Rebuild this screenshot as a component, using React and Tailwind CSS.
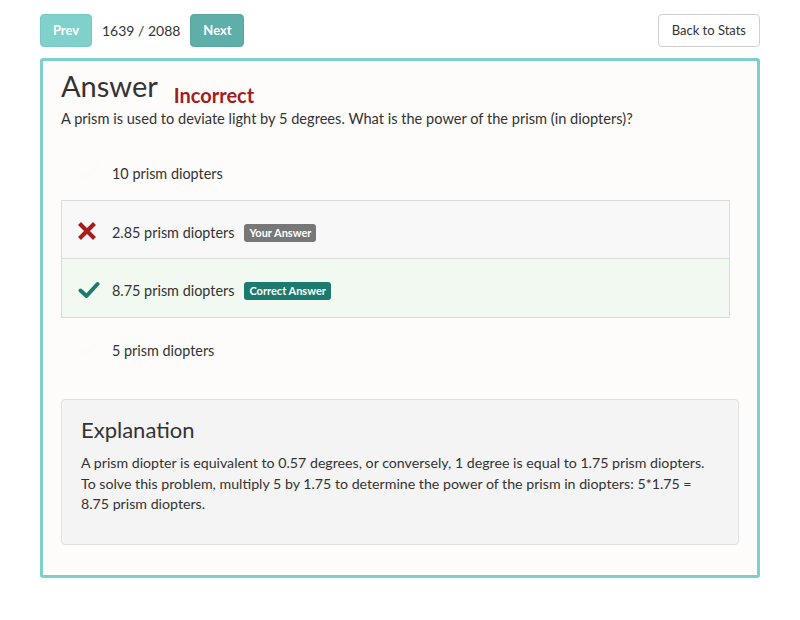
import { useState } from 'react'

const OPTIONS = [
  { id: 'a', text: '10 prism diopters', state: 'none' },
  { id: 'b', text: '2.85 prism diopters', state: 'wrong' },
  { id: 'c', text: '8.75 prism diopters', state: 'correct' },
  { id: 'd', text: '5 prism diopters', state: 'none' },
]

const CrossIcon = () => (
  <svg width="18" height="18" viewBox="0 0 18 18">
    <path d="M3 3 L15 15 M15 3 L3 15" stroke="#a51d1d" strokeWidth="4.2" strokeLinecap="square" />
  </svg>
)

const CheckIcon = ({ color = '#1d7a6e' }) => (
  <svg width="22" height="18" viewBox="0 0 22 18">
    <path d="M2.5 9.5 L8.5 15 L19.5 3" fill="none" stroke={color} strokeWidth="4" strokeLinecap="round" strokeLinejoin="round" />
  </svg>
)

function OptionRow({ opt }) {
  const rowCls =
    opt.state === 'wrong'
      ? 'bg-[#f8f8f8] border border-[#dcdcdc]'
      : opt.state === 'correct'
        ? 'bg-[#f2f9f1] border border-[#cbe5c7] border-t-0'
        : 'border border-transparent'

  return (
    <div className={`flex items-center h-[59px] pl-[16px] pt-[6px] ${rowCls}`}>
      <div className="w-[34px] flex items-center mt-[-3px]">
        {opt.state === 'wrong' && <CrossIcon />}
        {opt.state === 'correct' && <CheckIcon />}
        {opt.state === 'none' && <CheckIcon color="#fbfbfa" />}
      </div>
      <span className="text-[14.4px] text-[#333]">{opt.text}</span>
      {opt.state === 'wrong' && (
        <span className="ml-[10px] bg-[#777] text-white text-[11px] font-bold px-[5px] py-[2px] rounded-[3px] leading-[14px]">
          Your Answer
        </span>
      )}
      {opt.state === 'correct' && (
        <span className="ml-[10px] bg-[#1d7a6e] text-white text-[11px] font-bold px-[5px] py-[2px] rounded-[3px] leading-[14px]">
          Correct Answer
        </span>
      )}
    </div>
  )
}

export default function App() {
  const [idx] = useState(1639)

  return (
    <div className="min-h-[620px] bg-white px-[40px] pt-[14px] font-['Lato','Open_Sans',sans-serif] text-[#333]">
      <div className="flex items-center justify-between">
        <div className="flex items-center">
          <button className="h-[33px] w-[52px] rounded-[4px] bg-[#80d0cc] text-white text-[13px] font-bold border border-[#77c8c4]">
            Prev
          </button>
          <span className="mx-[10px] text-[14px] text-[#333]">{idx} / 2088</span>
          <button className="h-[33px] w-[54px] rounded-[4px] bg-[#5eaeaa] text-white text-[13px] font-bold border border-[#58a6a2]">
            Next
          </button>
        </div>
        <button className="h-[33px] px-[13px] rounded-[4px] bg-white border border-[#cfcfcf] text-[13px] text-[#333]">
          Back to Stats
        </button>
      </div>

      <div className="mt-[11px] border-[3px] border-[#7ed0cc] rounded-[3px] bg-[#fdfcfb] pl-[18px] pr-[18px] pt-[8px] pb-[30px]">
        <div className="flex items-end">
          <h1 className="text-[29px] leading-[34px] text-[#333]">Answer</h1>
          <span className="ml-[16px] mb-[-6px] text-[20px] font-bold text-[#a31c1c] leading-[28px]">Incorrect</span>
        </div>
        <p className="text-[14.6px] leading-[20px] mt-[6px]">
          A prism is used to deviate light by 5 degrees. What is the power of the prism (in diopters)?
        </p>

        <div className="mt-[12px] w-[669px]">
          {OPTIONS.map((opt) => (
            <OptionRow key={opt.id} opt={opt} />
          ))}
        </div>

        <div className="mt-[22px] bg-[#f4f4f4] border border-[#e0e0e0] rounded-[4px] px-[19px] pt-[16px] pb-[29px]">
          <h2 className="text-[22px] leading-[28px] text-[#333]">Explanation</h2>
          <div className="mt-[9px] text-[14.2px] leading-[20.5px] text-[#333] whitespace-nowrap">
            <p>A prism diopter is equivalent to 0.57 degrees, or conversely, 1 degree is equal to 1.75 prism diopters.</p>
            <p>To solve this problem, multiply 5 by 1.75 to determine the power of the prism in diopters: 5*1.75 =</p>
            <p>8.75 prism diopters.</p>
          </div>
        </div>
      </div>
    </div>
  )
}
